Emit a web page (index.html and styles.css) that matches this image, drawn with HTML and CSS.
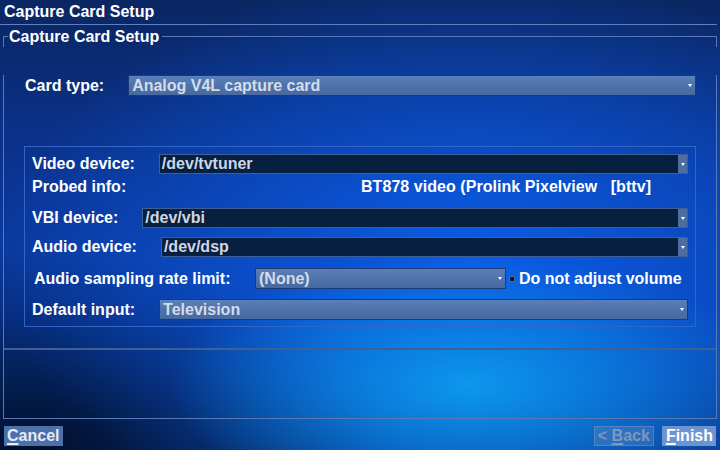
FILE: index.html
```html
<!DOCTYPE html>
<html>
<head>
<meta charset="utf-8">
<link rel="stylesheet" href="styles.css">
</head>
<body>
<div class="screen">
  <div class="titlebar">Capture Card Setup</div>
  <div class="group-head"><span class="group-title">Capture Card Setup</span></div>
  <div class="group-body">
    <div class="row row-card">
      <span class="label">Card type:</span>
      <div class="combo combo-light"><span class="combo-text">Analog V4L capture card</span><span class="arrow"></span></div>
    </div>
    <div class="inner">
      <div class="row r-video">
        <span class="label">Video device:</span>
        <div class="combo combo-dark"><span class="combo-text">/dev/tvtuner</span><span class="arrow-box"><span class="arrow"></span></span></div>
      </div>
      <div class="row r-probed">
        <span class="label">Probed info:</span>
        <span class="probed-value">BT878 video (Prolink Pixelview   [bttv]</span>
      </div>
      <div class="row r-vbi">
        <span class="label">VBI device:</span>
        <div class="combo combo-dark"><span class="combo-text">/dev/vbi</span><span class="arrow-box"><span class="arrow"></span></span></div>
      </div>
      <div class="row r-audio">
        <span class="label">Audio device:</span>
        <div class="combo combo-dark"><span class="combo-text">/dev/dsp</span><span class="arrow-box"><span class="arrow"></span></span></div>
      </div>
      <div class="row r-rate">
        <span class="label label-rate">Audio sampling rate limit:</span>
        <div class="combo combo-light combo-rate"><span class="combo-text">(None)</span><span class="arrow"></span></div>
        <span class="checkbox"></span>
        <span class="check-label">Do not adjust volume</span>
      </div>
      <div class="row r-input">
        <span class="label">Default input:</span>
        <div class="combo combo-light"><span class="combo-text">Television</span><span class="arrow"></span></div>
      </div>
    </div>
    <div class="separator"></div>
    <div class="spacer"></div>
  </div>
  <div class="footer">
    <span class="btn btn-cancel"><u>C</u>ancel</span>
    <span class="btn btn-back">&lt; <u>B</u>ack</span>
    <span class="btn btn-finish"><u>F</u>inish</span>
  </div>
</div>
</body>
</html>
```
FILE: styles.css
```css
html, body {
  margin: 0;
  padding: 0;
  width: 720px;
  height: 450px;
  overflow: hidden;
}
body {
  font-family: "Liberation Sans", Arial, sans-serif;
  font-weight: bold;
  font-size: 16px;
  color: #ffffff;
  background:
    radial-gradient(ellipse 300px 130px at 470px 385px, rgba(12,155,238,0.95), rgba(12,155,238,0) 100%),
    radial-gradient(ellipse 470px 290px at 470px 260px, rgba(10,92,232,1), rgba(10,92,232,0) 100%),
    radial-gradient(ellipse 380px 200px at 30px 450px, rgba(1,12,40,0.95), rgba(1,12,40,0) 100%),
    linear-gradient(180deg, #0a2662 0%, #0b3594 40%, #0a3ea8 70%, #083a88 100%);
}
.screen {
  width: 720px;
  height: 450px;
}
.titlebar {
  height: 24px;
  line-height: 24px;
  padding-left: 4px;
  margin-right: 3px;
  border-bottom: 1px solid #5f7fbd;
}
.group-head {
  display: flex;
  height: 20px;
  margin: 2px 3px 0 3px;
}
.group-head::before,
.group-head::after {
  content: "";
  align-self: flex-end;
  height: 11px;
  box-sizing: border-box;
  border-top: 1px solid #5a78b2;
}
.group-head::before {
  width: 5px;
  border-left: 1px solid #5a78b2;
}
.group-head::after {
  flex: 1;
  border-right: 1px solid #5a78b2;
}
.group-title {
  line-height: 20px;
  padding: 0 3px 0 1px;
}
.group-body {
  margin: 0 3px;
  border: 1px solid #5a78b2;
  border-top: none;
}
.row {
  display: flex;
  align-items: center;
  gap: 24px;
}
.label {
  line-height: 20px;
  white-space: nowrap;
}
.row-card {
  height: 21px;
  margin-top: 28px;
  padding: 0 20px 0 21px;
}
.combo {
  flex: 1;
  align-self: stretch;
  display: flex;
  align-items: center;
  box-sizing: border-box;
  min-width: 0;
}
.combo-text {
  flex: 1;
  white-space: nowrap;
  line-height: 18px;
}
.combo-light {
  background: linear-gradient(180deg, #5b80b9 0%, #4d72ab 55%, #4769a0 100%);
  border: 1px solid #1f3a72;
  padding-left: 3px;
  color: #d6dce8;
}
.combo-light .arrow {
  margin-right: 3px;
}
.combo-dark {
  background: #08203f;
  border: 1px solid #3f5f94;
  padding-left: 2px;
  color: #cfd6e4;
}
.arrow-box {
  align-self: stretch;
  width: 9px;
  background: #4e6ea0;
  display: flex;
  align-items: center;
  justify-content: center;
}
.arrow {
  width: 0;
  height: 0;
  border-left: 2px solid transparent;
  border-right: 2px solid transparent;
  border-top: 3px solid #ffffff;
}
.inner {
  margin: 50px 20px 0 20px;
  border: 1px solid #3464c6;
  padding: 0 7px 6px 7px;
}
.r-video { height: 20px; margin-top: 7px; }
.r-probed {
  height: 20px;
  margin-top: 3px;
  display: grid;
  grid-template-columns: 329px 1fr;
  gap: 0;
}
.probed-value {
  white-space: pre;
  line-height: 20px;
  letter-spacing: 0.05px;
}
.r-vbi { height: 20px; margin-top: 11px; }
.r-audio { height: 20px; margin-top: 9px; }
.r-rate { height: 21px; margin-top: 11px; gap: 0; }
.r-input { height: 21px; margin-top: 10px; }
.label-rate {
  padding-left: 2px;
  width: 221px;
}
.combo-rate {
  flex: 0 0 251px;
}
.checkbox {
  width: 6px;
  height: 6px;
  box-sizing: border-box;
  background: #06183a;
  border: 1px solid #4a6a9e;
  margin-left: 3px;
}
.check-label {
  margin-left: 4px;
  line-height: 20px;
  white-space: nowrap;
}
.separator {
  height: 2px;
  margin-top: 21px;
  background: #3f5f96;
}
.spacer {
  height: 68px;
}
.footer {
  display: flex;
  padding: 7px 4px 0 4px;
}
.btn {
  height: 20px;
  line-height: 20px;
  box-sizing: border-box;
  white-space: nowrap;
}
.btn u {
  text-decoration-thickness: 2px;
  text-underline-offset: 2px;
}
.btn-cancel {
  background: #4b70aa;
  color: #e6ebf4;
  padding: 0 4px 0 3px;
}
.btn-back {
  margin-left: auto;
  background: rgba(110,140,190,0.35);
  border: 1px solid rgba(120,150,200,0.5);
  color: #7d97bd;
  padding: 0 3px;
  line-height: 18px;
}
.btn-finish {
  margin-left: 8px;
  background: #6e93cf;
  color: #ffffff;
  padding: 0 3px 0 4px;
}
```
